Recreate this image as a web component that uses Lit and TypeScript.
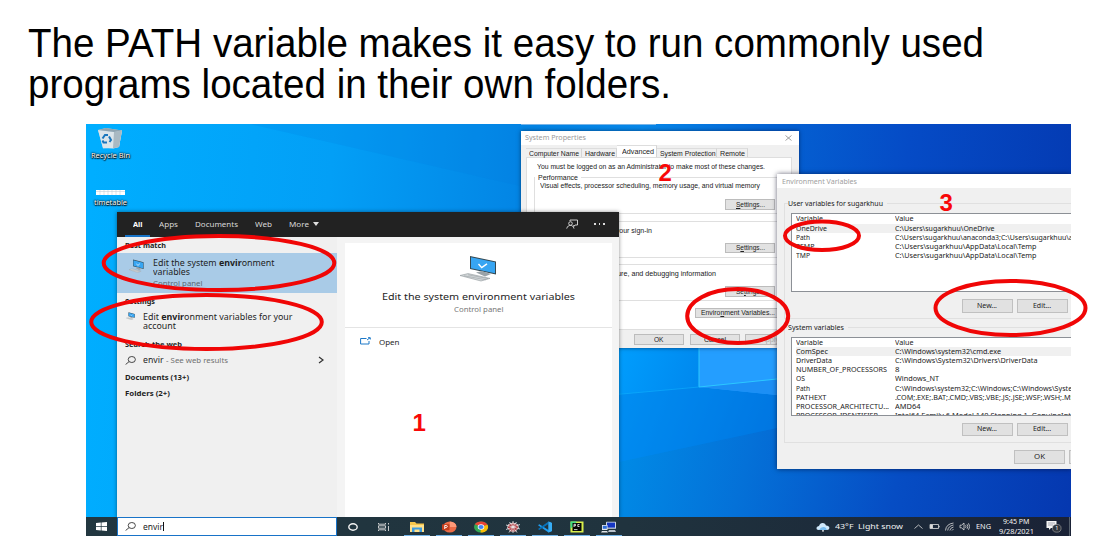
import { LitElement, html, svg, css } from "lit";
import { customElement, property } from "lit/decorators.js";

/** A single line of text stretched horizontally to a given width. */
@customElement("fit-text")
class FitText extends LitElement {
  @property({ type: Number }) w = 0;
  static styles = css`
    :host { display: inline-block; white-space: pre; flex: none; text-align: left; vertical-align: top; }
    .run { display: inline-block; transform-origin: 0 50%; vertical-align: top; }
  `;
  firstUpdated() {
    const run = this.renderRoot.querySelector(".run") as HTMLElement;
    const natural = run.getBoundingClientRect().width;
    this.style.width = `${this.w}px`;
    if (natural) run.style.transform = `scaleX(${this.w / natural})`;
  }
  render() {
    return html`<span class="run"><slot></slot></span>`;
  }
}

const t = (text: unknown, w: number) => html`<fit-text .w=${w}>${text}</fit-text>`;

@customElement("desk-wallpaper")
class DeskWallpaper extends LitElement {
  static styles = css`:host, svg { display: block; width: 985px; height: 412px; }`;
  render() {
    return html`<svg viewBox="86 124 985 412" preserveAspectRatio="none">
      <defs>
        <linearGradient id="base" gradientUnits="userSpaceOnUse" x1="86" y1="240" x2="1071" y2="330">
          <stop offset="0" stop-color="#00aeff" /><stop offset=".24" stop-color="#039ff6" />
          <stop offset=".44" stop-color="#0384e4" /><stop offset=".55" stop-color="#0788ea" />
          <stop offset=".68" stop-color="#0462d3" /><stop offset=".82" stop-color="#054bc6" />
          <stop offset="1" stop-color="#043ab2" />
        </linearGradient>
        <linearGradient id="low" gradientUnits="userSpaceOnUse" x1="600" y1="370" x2="780" y2="440">
          <stop offset="0" stop-color="#00a0ff" /><stop offset="1" stop-color="#0070dd" />
        </linearGradient>
        <linearGradient id="deep" gradientUnits="userSpaceOnUse" x1="610" y1="420" x2="1071" y2="530">
          <stop offset="0" stop-color="#008ee8" /><stop offset=".3" stop-color="#0471d8" />
          <stop offset=".62" stop-color="#064dc4" /><stop offset="1" stop-color="#0537af" />
        </linearGradient>
      </defs>
      <rect x="86" y="124" width="985" height="412" fill="url(#base)" />
      <path d="M250 124 L520 186 V124Z" fill="#0578e0" opacity=".18" />
      <path d="M600 348H1071V536H600Z" fill="url(#low)" />
      <path d="M600 466L777 428L1071 400V536H600Z" fill="url(#deep)" />
      <path d="M600 396L699 387L777 395V428L600 466Z" fill="#007ee6" opacity=".4" />
      <path d="M699 348H777V395L699 387Z" fill="#249eff" />
      <path d="M699 387L777 379V395Z" fill="#1c8ff5" />
      <path d="M699 348V387L777 379" fill="none" stroke="#2cc8ff" stroke-width="1" />
      <path d="M699 387L600 396" stroke="#10b4ff" stroke-width=".8" opacity=".7" />
      <rect x="521" y="124" width="135" height="1" fill="#77b4e8" />
    </svg>`;
  }
}

const computer = svg`
  <path d="M10 1L36 6.5V19.5L10 14Z" fill="#35474f"/>
  <path d="M11 2.3L35 7.3V18.3L11 13.2Z" fill="#37a5f2"/>
  <path d="M18.5 9l3.2 3.6L27 8.9" fill="none" stroke="#fff" stroke-width="1.4"/>
  <path d="M16 17.5l6-1.6L31 19l-6 2.4Z" fill="#9aa3a8"/>
  <path d="M0 20.5L8 18.6L30 23.4L21 26Z" fill="#d4d8da" stroke="#8f979b" stroke-width=".6"/>
  <path d="M4 20.8l22 4M8 19.8l20 3.8" stroke="#8f979b" stroke-width=".5"/>`;
const lens = html`<svg class="lens" viewBox="0 0 11 9"><ellipse cx="6.8" cy="3.5" rx="3.6" ry="3" /><path d="M4.1 5.6L.6 8.5" /></svg>`;

@customElement("search-panel")
class SearchPanel extends LitElement {
  static styles = css`
    :host { display: block; width: 502px; height: 306px; background: #f4f4f4; font: 8px/10px "Noto Sans", "Open Sans", sans-serif; color: #1e1e1e; box-shadow: 0 0 4px rgba(0,0,0,.45); }
    .head { display: flex; align-items: center; height: 25px; background: #222; color: #d8d8d8; font-size: 7.5px; box-sizing: border-box; padding-left: 8px; }
    .tab { height: 25px; line-height: 25px; margin-right: 17px; }
    .tab.on { width: 25px; box-sizing: border-box; padding-left: 8px; border-bottom: 2px solid #1874c8; color: #fff; font-weight: 700; margin-right: 9px; }
    .caret { width: 0; border: 3.5px solid transparent; border-top: 4px solid #e0e0e0; border-bottom: 0; margin-left: -13px; }
    .fb { width: 12px; height: 10px; margin-left: 247px; fill: none; stroke: #e0e0e0; stroke-width: .9; }
    .dots { display: flex; gap: 3px; margin-left: 16px; }
    .dots i { width: 1.6px; height: 1.2px; background: #ddd; }
    .body { display: grid; grid-template-columns: 220px 267px; column-gap: 8px; height: 281px; }
    .list { background: #f0f0f0; }
    .h { font-weight: 700; font-size: 7.2px; padding-left: 8px; height: 16px; line-height: 17px; }
    .best { display: flex; gap: 9px; height: 40px; box-sizing: border-box; background: #a9cbe7; padding: 5px 0 0 12px; }
    .best svg { width: 15px; height: 14px; margin-top: 1px; }
    .col { display: flex; flex-direction: column; align-items: flex-start; line-height: 9.6px; }
    .sub { color: #5b6a75; font-size: 7.4px; margin-top: 2px; }
    .item { display: flex; gap: 8px; padding: 3px 0 0 9px; height: 27px; box-sizing: border-box; }
    .item svg { width: 9px; height: 8px; }
    .web { display: flex; align-items: center; height: 17px; padding-left: 8px; }
    .lens { width: 11px; height: 9px; fill: none; stroke: #333; stroke-width: .9; margin-right: 6.5px; }
    .grey { color: #707070; margin-left: 3px; font-size: 7.3px; height: 10px; }
    .chev { width: 6px; height: 8px; margin-left: 90px; fill: none; stroke: #333; stroke-width: 1.2; }
    .view { background: #fff; margin-top: 6px; display: flex; flex-direction: column; align-items: center; }
    .big { width: 37px; height: 27px; margin-top: 12px; }
    .name { font-size: 9.5px; line-height: 12px; height: 12px; margin-top: 9px; }
    .kind { color: #777; font-size: 7.2px; line-height: 9px; height: 9px; margin-top: 2px; }
    .open { align-self: stretch; display: flex; gap: 8px; margin-top: 13px; border-top: 1px solid #e4e4e4; padding: 9px 0 0 15px; font-size: 7.5px; }
    .open svg { width: 11px; height: 8px; fill: none; stroke: #1c78c8; stroke-width: 1; }
  `;
  render() {
    return html`
      <div class="head">
        <div class="tab on">${t("All", 9.5)}</div><div class="tab">${t("Apps", 19)}</div>
        <div class="tab">${t("Documents", 43)}</div><div class="tab">${t("Web", 17)}</div><div class="tab">${t("More", 20)}</div>
        <i class="caret"></i>
        <svg class="fb" viewBox="0 0 12 10"><path d="M4 2V1H11.5V6H9L7.8 7.5V6" /><circle cx="4.5" cy="4.5" r="1.8" /><path d="M.7 9.6C1.4 7 3 6.4 4.5 6.4S7.400 7 8 9.600" /></svg>
        <div class="dots"><i></i><i></i><i></i></div>
      </div>
      <div class="body">
        <div class="list">
          <div class="h">${t("Best match", 41)}</div>
          <div class="best"><svg viewBox="0 0 37 27" preserveAspectRatio="none">${computer}</svg>
            <div class="col">${t(html`Edit the system <b>envir</b>onment`, 121.5)}${t("variables", 37)}<div class="sub">${t("Control panel", 49.500)}</div></div>
          </div>
          <div class="h">${t("Settings", 30)}</div>
          <div class="item"><svg viewBox="0 0 37 27" preserveAspectRatio="none">${computer}</svg>
            <div class="col">${t(html`Edit <b>envir</b>onment variables for your`, 149.5)}${t("account", 33)}</div>
          </div>
          <div class="h">${t("Search the web", 57)}</div>
          <div class="web">${lens}${t("envir", 20.5)}<div class="grey">${t("- See web results", 62)}</div>
            <svg class="chev" viewBox="0 0 6 8"><path d="M1 1L5 4L1 7" /></svg></div>
          <div class="h">${t("Documents (13+)", 64)}</div>
          <div class="h">${t("Folders (2+)", 45)}</div>
        </div>
        <div class="view">
          <svg class="big" viewBox="0 0 37 27">${computer}</svg>
          <div class="name">${t("Edit the system environment variables", 193)}</div>
          <div class="kind">${t("Control panel", 49.500)}</div>
          <div class="open"><svg viewBox="0 0 11 8"><path d="M6.500 1.500H.6V7H9V4M7 3L10 .8M8 .7H10.300V2.500" /></svg>${t("Open", 20.5)}</div>
        </div>
      </div>`;
  }
}

@customElement("system-properties")
class SystemProperties extends LitElement {
  static styles = css`
    :host { display: block; box-sizing: border-box; width: 278px; height: 217px; background: #f0f0f0; font: 6.8px/10px "Liberation Sans", Arial, sans-serif; color: #222; box-shadow: 0 0 4px rgba(0,0,30,.55); }
    .bar { display: flex; justify-content: space-between; height: 14px; line-height: 14px; background: #fff; color: #999; padding: 0 7px 0 4px; font-family: "Noto Sans", sans-serif; }
    .bar svg { width: 7px; height: 6px; margin-top: 4px; stroke: #888; stroke-width: .8; }
    .tabs { display: flex; align-items: flex-end; height: 12px; padding-left: 5px; }
    .tab { height: 9.500px; line-height: 10px; border-right: 1px solid #d5d5d5; border-top: 1px solid #ddd; box-sizing: border-box; padding-left: 3px; }
    .c { width: 55.500px; } .h { width: 35.500px; } .s { width: 60px; } .r { width: 31px; }
    .a { width: 40px; height: 12px; background: #fff; padding-left: 5px; line-height: 12px; }
    .page { background: #fff; height: 172.500px; width: 266px; margin-left: 5px; border: 1px solid #dedede; box-sizing: border-box; padding-left: 7px; overflow: hidden; }
    .note { padding-left: 3px; height: 19px; line-height: 18px; }
    .group { width: 252px; border: 1px solid #dfdfdf; box-sizing: border-box; height: 37px; margin-bottom: 6.500px; display: flex; flex-direction: column; }
    .legend { height: 5px; line-height: 5px; margin-top: -3px; align-self: flex-start; background: #fff; padding: 0 3px; }
    .desc { padding-left: 5px; height: 19px; line-height: 12px; }
    .btn { box-sizing: border-box; background: #e2e2e2; border: 1px solid #bcbcbc; display: flex; justify-content: center; align-items: center; height: 10.5px; width: 50px; line-height: 9px; }
    .group .btn { margin-left: 190px; }
    .later { padding: 3px 0 0 72.500px; height: 21px; box-sizing: border-box; line-height: 11px; }
    .env { width: 85px; margin-left: 161px; }
    .foot { display: flex; gap: 5.500px; padding: 4.5px 0 0 113px; }
    .off { color: #aaa; }
  `;
  render() {
    const settings = (u: string) => html`<div class="btn">${t(u === "S" ? html`<u>S</u>ettings...` : u === "e" ? html`S<u>e</u>ttings...` : html`Se<u>t</u>tings...`, 29)}</div>`;
    return html`
      <div class="bar">${t("System Properties", 61)}<svg viewBox="0 0 7 6"><path d="M.5 .5L6.500 5.500M6.500 .5L.5 5.500" /></svg></div>
      <div class="tabs">
        <div class="tab c">${t("Computer Name", 50)}</div><div class="tab h">${t("Hardware", 30)}</div><div class="tab a">${t("Advanced", 32)}</div>
        <div class="tab s">${t("System Protection", 55.5)}</div><div class="tab r">${t("Remote", 25)}</div>
      </div>
      <div class="page">
        <div class="note">${t("You must be logged on as an Administrator to make most of these changes.", 228)}</div>
        <div class="group"><div class="legend">${t("Performance", 40)}</div><div class="desc">${t("Visual effects, processor scheduling, memory usage, and virtual memory", 220)}</div>${settings("S")}</div>
        <div class="group"><div class="later">${t("to your sign-in", 44)}</div>${settings("e")}</div>
        <div class="group"><div class="later">${t("failure, and debugging information", 108)}</div>${settings("t")}</div>
        <div class="btn env">${t(html`Enviro<u>n</u>ment Variables...`, 74)}</div>
      </div>
      <div class="foot"><div class="btn">${t("OK", 9.500)}</div><div class="btn">${t("Cancel", 22)}</div><div class="btn off">${t("Apply", 18)}</div></div>`;
  }
}

type Row = [string, number, string, number];
const userVars: Row[] = [
  ["OneDrive", 31, "C:\\Users\\sugarkhuu\\OneDrive", 99.5],
  ["Path", 14, "C:\\Users\\sugarkhuu\\anaconda3;C:\\Users\\sugarkhuu\\anaconda3", 210],
  ["TEMP", 18.5, "C:\\Users\\sugarkhuu\\AppData\\Local\\Temp", 141.5],
  ["TMP", 14, "C:\\Users\\sugarkhuu\\AppData\\Local\\Temp", 141.5],
];
const systemVars: Row[] = [
  ["ComSpec", 32, "C:\\Windows\\system32\\cmd.exe", 106],
  ["DriverData", 36, "C:\\Windows\\System32\\Drivers\\DriverData", 142.5],
  ["NUMBER_OF_PROCESSORS", 91, "8", 4.5],
  ["OS", 9, "Windows_NT", 44],
  ["Path", 14, "C:\\Windows\\system32;C:\\Windows;C:\\Windows\\System32", 192],
  ["PATHEXT", 30.5, ".COM;.EXE;.BAT;.CMD;.VBS;.VBE;.JS;.JSE;.WSF;.WSH;.MSC", 184],
  ["PROCESSOR_ARCHITECTU...", 93, "AMD64", 25.5],
  ["PROCESSOR_IDENTIFIER", 82, "Intel64 Family 6 Model 140 Stepping 1, GenuineIntel", 182],
];

@customElement("environment-variables")
class EnvironmentVariables extends LitElement {
  static styles = css`
    :host { display: block; width: 294px; height: 295.5px; overflow: hidden; background: #f0f0f0; font: 6.9px/9.15px "Noto Sans", "Open Sans", sans-serif; color: #222; }
    .bar { height: 14.500px; line-height: 15px; background: #fff; color: #a0a0a0; padding-left: 5px; }
    .group { border: 1px solid #e0e0e0; border-right: 0; box-sizing: border-box; margin-left: 7px; height: 116px; padding-left: 6px; display: flex; flex-direction: column; }
    .first { margin-top: 15px; margin-bottom: 7.500px; }
    .legend { align-self: flex-start; background: #f0f0f0; margin: -5px 0 0 -3px; padding-right: 4px; height: 10px; line-height: 9px; }
    .box { background: #fff; border: 1px solid #8c9096; border-right: 0; box-sizing: border-box; height: 79px; overflow: hidden; margin-top: 4px; padding-left: 4px; flex: none; }
    .row { display: grid; grid-template-columns: 98.5px 200px; height: 9.15px; }
    .top { height: 9.500px; line-height: 10px; }
    .sel { background: #f0f0f0; }
    .btns { display: flex; gap: 4.500px; padding: 7px 0 0 171px; }
    .btn { flex: none; box-sizing: border-box; width: 50.500px; height: 13.500px; background: #e1e1e1; border: 1px solid #c0c0c0; display: flex; justify-content: center; align-items: center; line-height: 10px; }
    .foot { display: flex; gap: 4.500px; padding: 7.500px 0 0 237px; }
  `;
  table(rows: Row[]) {
    return html`<div class="box">
      <div class="row top"><span>${t("Variable", 27)}</span><span>${t("Value", 18.5)}</span></div>
      ${rows.map(([n, nw, v, vw], i) => html`<div class="row ${i === 0 ? "sel" : ""}"><span>${t(n, nw)}</span><span>${t(v, vw)}</span></div>`)}
    </div>
    <div class="btns"><div class="btn">${t("New...", 20)}</div><div class="btn">${t("Edit...", 18)}</div></div>`;
  }
  render() {
    return html`
      <div class="bar">${t("Environment Variables", 75)}</div>
      <div class="group first"><div class="legend">${t("User variables for sugarkhuu", 95)}</div>${this.table(userVars)}</div>
      <div class="group"><div class="legend">${t("System variables", 56)}</div>${this.table(systemVars)}</div>
      <div class="foot"><div class="btn">${t("OK", 11)}</div><div class="btn">${t("Cancel", 22)}</div></div>`;
  }
}

const apps = [
  svg`<path d="M1 1H6L7.500 2.500H15V11H1Z" fill="#f5c64c"/><path d="M1 4H15V11H1Z" fill="#ffe08a"/><path d="M3 6.500H13V11H10.500V8.500H5.500V11H3Z" fill="#3d9be0"/>`,
  svg`<ellipse cx="8.800" cy="6" rx="6.700" ry="5.500" fill="#ed6c47"/><path d="M8.800 .5A6.700 5.500 0 0 1 15.500 6H8.800Z" fill="#ff9a78"/><rect x="1" y="3.200" width="7.500" height="6" rx=".6" fill="#c43e1c"/><path d="M3.700 8V4.500H5.200Q6.500 4.700 6.300 5.700T4 6.700" fill="none" stroke="#fff" stroke-width=".9"/>`,
  svg`<ellipse cx="8" cy="6" rx="7" ry="5.500" fill="#34a853"/><path d="M8 6L1.900 3.300A7 5.500 0 0 1 14.500 3.800Z" fill="#ea4335"/><path d="M8 6L14.500 3.800A7 5.500 0 0 1 7.500 11.500Z" fill="#fbbc05"/><ellipse cx="8" cy="6" rx="3.300" ry="2.700" fill="#fff"/><ellipse cx="8" cy="6" rx="2.600" ry="2.100" fill="#4285f4"/>`,
  svg`<path d="M8 1.500L12.500 3.500L13.500 7L10.500 10.500H5.500L2.500 7L3.500 3.500Z" fill="#a82027"/><path d="M8 0V12M1 4L15 8M1 8.500L15 3.500M4 11.500L11.500 1M12 11.500L4.500 1M3.500 3.500L8 2L12.500 3.500L13.500 7L10.500 10H5.500L2.500 7Z" fill="none" stroke="#eee" stroke-width=".8"/>`,
  svg`<path d="M11.500 .5L15 2V10L11.500 11.500L1 4.300L2.300 3.300L11.500 9Z" fill="#1f9cf0"/><path d="M11.500 .5V3L2.300 8.900L1 7.900Z" fill="#0872b9"/><path d="M11.500 .5L15 2V10L11.500 11.500Z" fill="#38adf5"/>`,
  svg`<rect x="1.500" y=".5" width="13" height="11" fill="#d9ef4c"/><path d="M1.500 .5H8L1.500 8Z" fill="#3fdc82"/><rect x="3.500" y="2" width="9" height="8" fill="#050505"/><path d="M5 6V3.300H6.500V4.800H5M10.500 3.500H8.800V5.500H10.500M5 8.600H8.500" fill="none" stroke="#fff" stroke-width=".8"/>`,
  svg`<rect x="5" y=".8" width="10" height="7" rx=".5" fill="#cdd6e2"/><rect x="6" y="1.600" width="8" height="5" fill="#1637c4"/><path d="M8 9H14L15 11H7Z" fill="#b8c2cc"/><rect x="1" y="4" width="5.500" height="5" fill="#e5e9ee"/><rect x="1.800" y="4.800" width="4" height="3" fill="#2f6fd8"/><path d="M1 10H6L7 11.500H0Z" fill="#dfe4e8"/>`,
];

@customElement("task-bar")
class TaskBar extends LitElement {
  static styles = css`
    :host { display: flex; align-items: center; width: 985px; height: 19px; background: linear-gradient(90deg, #223740 0%, #20333e 55%, #1c2a3a 80%, #1a2236 100%); color: #f2f2f2; font: 7.300px/9px "Noto Sans", "Open Sans", sans-serif; }
    svg { display: block; flex: none; }
    .win { width: 11px; height: 9px; margin: 0 10px; fill: #fff; }
    .box { flex: none; display: flex; align-items: center; box-sizing: border-box; width: 220px; height: 19px; background: #fff; border: 1.200px solid #1873c8; padding-left: 7px; color: #222; font-size: 8.500px; line-height: 10px; }
    .lens { width: 11px; height: 9px; fill: none; stroke: #333; stroke-width: .9; margin-right: 6.500px; }
    .cur { width: 1px; height: 9px; background: #111; }
    .ring { width: 10px; height: 8px; margin-left: 11px; fill: none; stroke: #f5f5f5; stroke-width: 1.400; }
    .tv { width: 12px; height: 8px; margin-left: 20px; fill: none; stroke: #ddd; stroke-width: .9; }
    .apps { display: flex; gap: 6px; margin-left: 13.500px; }
    .app { width: 26px; height: 19px; box-sizing: border-box; border-bottom: 1.300px solid #73b5ea; padding: 3.500px 5px 0; }
    .app svg { width: 16px; height: 12px; }
    .cloud { width: 14px; height: 10px; margin-left: 194px; }
    .wx { display: flex; gap: 4.500px; margin-left: 5.500px; font-size: 7.500px; }
    .tray { width: 56px; height: 9px; margin-left: 11px; fill: none; stroke: #ddd; stroke-width: .8; }
    .eng { margin-left: 6px; font-size: 7px; }
    .clock { display: flex; flex-direction: column; align-items: center; margin-left: 8px; font-size: 6.600px; line-height: 9.300px; }
    .note { width: 16px; height: 13px; margin-left: 12px; }
    .num { font: 5.500px "Noto Sans", sans-serif; fill: #fff; }
    .edge { height: 19px; border-left: 1px solid #56606c; margin-left: auto; width: 1px; }
  `;
  render() {
    return html`
      <svg class="win" viewBox="0 0 11 9"><path d="M0 1L4.800 .5V4.200H0ZM5.500 .4L11 0V4.200H5.500ZM0 4.900H4.800V8.500L0 8ZM5.500 4.900H11V9L5.500 8.600Z" /></svg>
      <div class="box">${lens}${t("envir", 20)}<i class="cur"></i></div>
      <svg class="ring" viewBox="0 0 10 8"><ellipse cx="5" cy="4" rx="4.200" ry="3.200" /></svg>
      <svg class="tv" viewBox="0 0 12 8"><path d="M.5 0V1.200H7.500V0M.5 8V6.800H7.500V8M.5 2.800H7.500V5.200H.5ZM10.500 0V1.500M10.500 3V8" /></svg>
      <div class="apps">${apps.map((a) => html`<div class="app"><svg viewBox="0 0 16 12">${a}</svg></div>`)}</div>
      <svg class="cloud" viewBox="0 0 14 10"><path d="M3 8Q0 8 .6 5.500Q1.200 4 3 4Q4 .8 7 1Q9.500 1.200 10 3.500Q13.300 3.500 13.400 6Q13.200 8 11 8Z" fill="#cfe8fb" /><path d="M3 8Q5 4.500 8 5Q10 5 11 8Z" fill="#79bdf0" /><circle cx="7" cy="8.800" r=".9" fill="#fff" /></svg>
      <div class="wx">${t("43°F", 18.5)}${t("Light snow", 45)}</div>
      <svg class="tray" viewBox="0 0 56 9">
        <path d="M.5 6.500L4.500 3L8.500 6.500" /><path d="M16 2.500H24.500V6.500H16ZM25.300 3.800V5.300" /><path d="M16.500 3H18.500V6H16.500Z" fill="#ddd" />
        <path d="M31.500 8.500Q32 2 39.500 1M33.700 8.500Q34.200 4 39.500 3M35.900 8.500Q36.200 5.700 39.500 5M38 8.500L39.500 7" />
        <path d="M46 3.200H47.500L50 1V8L47.500 5.800H46ZM51.500 3.300Q52.500 4.500 51.500 5.800M53 2.300Q54.700 4.500 53 6.800M54.500 1.300Q56.900 4.500 54.500 7.800" />
      </svg>
      <div class="eng">${t("ENG", 15)}</div>
      <div class="clock">${t("9:45 PM", 26.5)}${t("9/28/2021", 35)}</div>
      <svg class="note" viewBox="0 0 16 13"><path d="M.5 1H10.500V8H5L3 10V8H.5Z" fill="#f5f5f5" /><path d="M2 3H9M2 5H7" stroke="#889" stroke-width=".7" /><ellipse cx="10.800" cy="8.300" rx="4.300" ry="3.900" fill="#30353d" stroke="#aaa" stroke-width=".6" /><text class="num" x="9.300" y="10.300">1</text></svg>
      <i class="edge"></i>`;
  }
}

@customElement("app-root")
class AppRoot extends LitElement {
  static styles = css`
    :host { display: block; width: 1107px; height: 547px; background: #fff; overflow: hidden; position: relative; }
    h1 { margin: 0; box-sizing: border-box; height: 124px; padding: 22.500px 0 0 28px; font: 400 40px/41px "Liberation Sans", Arial, sans-serif; color: #000; display: flex; flex-direction: column; }
    .desk { position: relative; margin-left: 86px; width: 985px; height: 412px; overflow: hidden; }
    .desk > * { position: absolute; }
    .wall { left: 0; top: 0; }
    .sys { left: 435px; top: 7px; }
    .envw { left: 691px; top: 49.500px; box-shadow: 0 0 5px rgba(0,0,30,.6); }
    .search { left: 31px; top: 87.500px; }
    .task { left: 0; top: 393px; }
    .icon { display: flex; flex-direction: column; align-items: center; width: 48px; font: 7px/9px "Noto Sans", sans-serif; color: #fff; text-shadow: 0 0 1.500px #000, .5px .5px 1px #000, 0 0 2px #000; }
    .bin { left: 0; top: 3px; }
    .bin svg { width: 26px; height: 22px; margin-bottom: 1.500px; }
    .time { left: 0; top: 66px; }
    .time svg { width: 29px; height: 5px; margin-bottom: 3px; }
    .marks { position: absolute; left: 0; top: 0; width: 1107px; height: 547px; }
    .ring { fill: none; stroke: #f00606; stroke-width: 4; }
    .n { font: 700 24px "Liberation Sans", Arial, sans-serif; fill: #f80808; }
  `;
  render() {
    return html`
      <h1>${t("The PATH variable makes it easy to run commonly used", 956)}${t("programs located in their own folders.", 643)}</h1>
      <div class="desk">
        <desk-wallpaper class="wall"></desk-wallpaper>
        <div class="icon bin"><svg viewBox="0 0 26 22"><path d="M1 3L9 1L25 3.500L22 20L6 21.500Z" fill="#b9d3e2" /><path d="M1 3L17 5L25 3.500L22 20L16 21.500L6 21Z" fill="#dbe5ea" /><path d="M17 5L25 3.500L22 20L16 21.500Z" fill="#a9b9c2" /><path d="M1 3L9 1L25 3.500L17 5Z" fill="#8fa4b0" /><path d="M5.500 11.500L8 8H11M12 9.500L14 13L12.500 15M10 15.500H6.500L5.500 13.500" fill="none" stroke="#1976bd" stroke-width="2" /></svg>${t("Recycle Bin", 39)}</div>
        <div class="icon time"><svg viewBox="0 0 29 5"><rect width="29" height="5" fill="#fff" /><path d="M0 1.500H29M4 0V5M8 0V5M12 0V5M16 0V5M20 0V5M24 0V5" stroke="#b9c7d2" stroke-width=".5" /></svg>${t("timetable", 33)}</div>
        <system-properties class="sys"></system-properties>
        <environment-variables class="envw"></environment-variables>
        <search-panel class="search"></search-panel>
        <task-bar class="task"></task-bar>
      </div>
      <svg class="marks" viewBox="0 0 1107 547">
        <ellipse class="ring" cx="219" cy="263" rx="115.300" ry="27" /><ellipse class="ring" cx="206.500" cy="322" rx="115.300" ry="27" />
        <ellipse class="ring" cx="737.700" cy="316" rx="50.500" ry="27" /><ellipse class="ring" cx="822" cy="235.700" rx="37" ry="14.300" />
        <ellipse class="ring" cx="1010.500" cy="308" rx="75" ry="27" />
        <text class="n" x="412.500" y="430.500">1</text><text class="n" x="658.500" y="181">2</text><text class="n" x="939.500" y="211">3</text>
      </svg>`;
  }
}
